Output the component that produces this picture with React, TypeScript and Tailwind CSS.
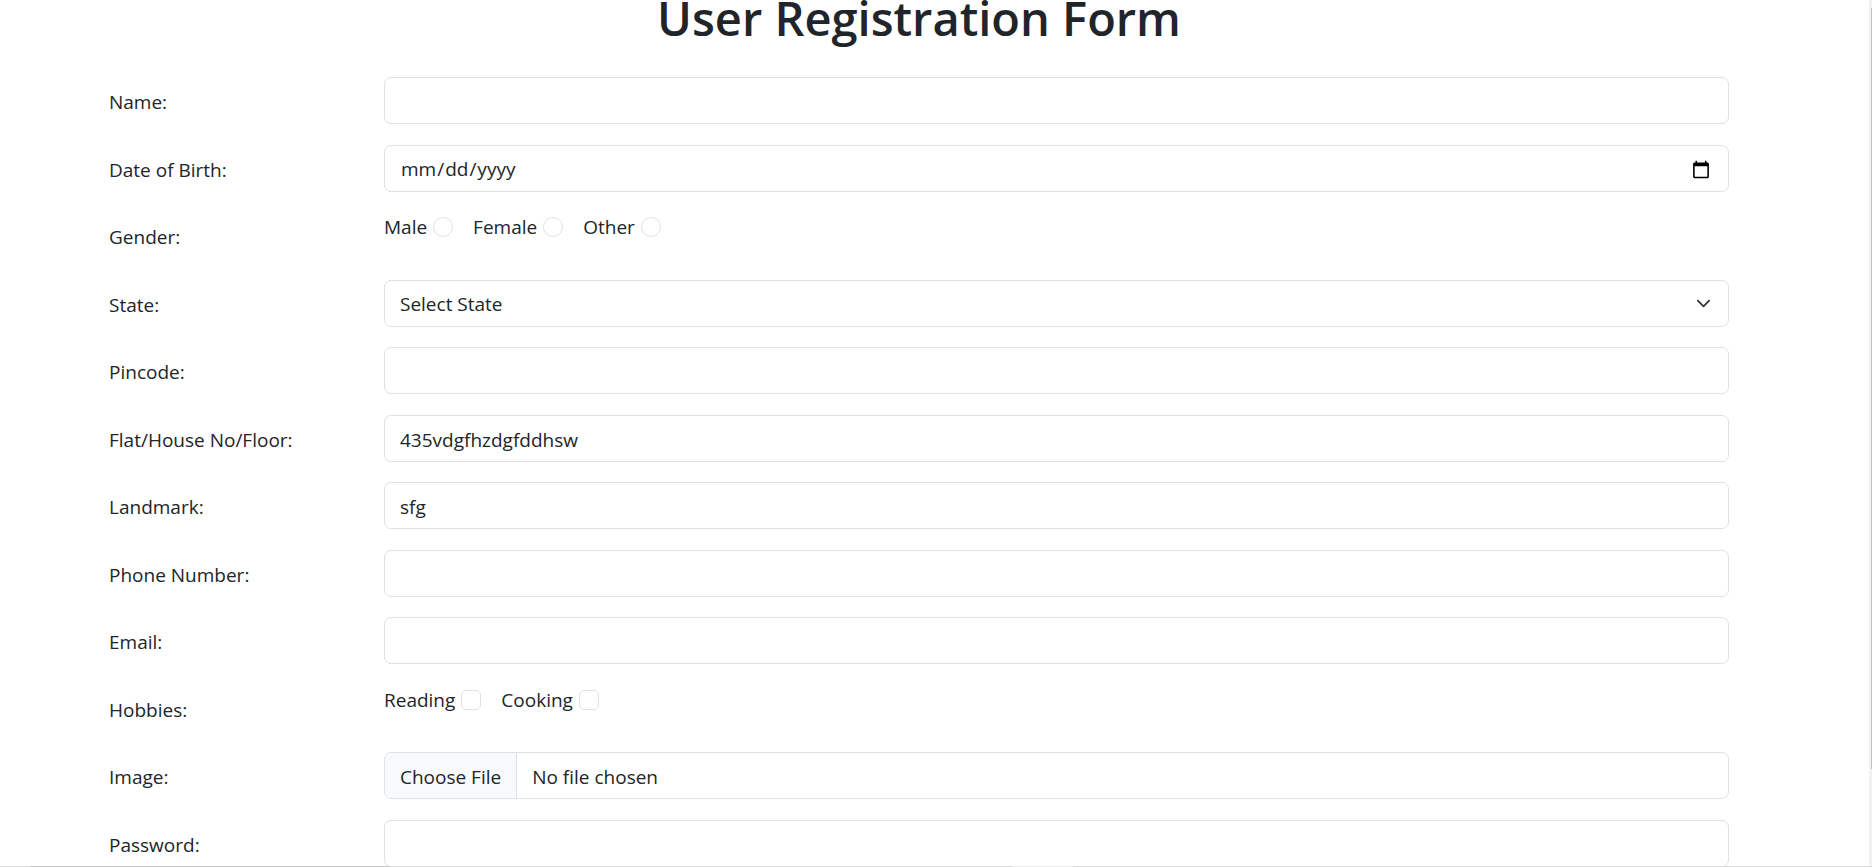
import type { ReactNode } from "react";

const control =
  "block h-[47px] w-full rounded-[7px] border border-[#dee2e6] bg-white px-[15px] pt-0.5 text-[19px] text-[#212529] outline-none focus:border-[#86b7fe]";

function Row({ label, htmlFor, children }: { label: string; htmlFor?: string; children: ReactNode }) {
  const labelClass = "w-1/6 shrink-0 px-[15px] pt-2.5 leading-[30px]";
  return (
    <div className="flex min-h-[47px] odd:mb-[21px] even:mb-5">
      {htmlFor ? (
        <label htmlFor={htmlFor} className={labelClass}>
          {label}
        </label>
      ) : (
        <span className={labelClass}>{label}</span>
      )}
      <div className="min-w-0 flex-1 px-[15px]">{children}</div>
    </div>
  );
}

function TextRow({ id, label, type = "text", value }: { id: string; label: string; type?: string; value?: string }) {
  return (
    <Row label={label} htmlFor={id}>
      <input id={id} name={id} type={type} defaultValue={value} className={control} />
    </Row>
  );
}

function Choices({ type, name, options }: { type: "radio" | "checkbox"; name: string; options: string[] }) {
  const shape = type === "radio" ? "rounded-full" : "rounded-[5px]";
  return (
    <div role="group" aria-label={name} className="flex flex-wrap gap-x-5">
      {options.map((option) => (
        <label key={option} className="flex items-center gap-1.5 leading-[30px]">
          {option}
          <input
            type={type}
            name={name}
            value={option}
            className={`size-5 appearance-none border border-[#dee2e6] bg-white checked:border-[#0d6efd] checked:bg-[#0d6efd] ${shape}`}
          />
        </label>
      ))}
    </div>
  );
}

export default function App() {
  return (
    <div className="relative h-screen overflow-hidden bg-white pr-[34px] font-['Open_Sans','Noto_Sans',sans-serif] text-[19px] text-[#212529]">
      <main className="mx-auto max-w-[1650px]">
        <h1 className="-mt-3 mb-[29px] text-center text-[47px] leading-[60px] font-semibold">User Registration Form</h1>
        <form>
          <TextRow id="name" label="Name:" />
          <Row label="Date of Birth:" htmlFor="dob">
            <input
              id="dob"
              name="dob"
              type="date"
              className={`${control} [&::-webkit-calendar-picker-indicator]:mr-0.5 [&::-webkit-calendar-picker-indicator]:size-5 [&::-webkit-calendar-picker-indicator]:p-0 [&::-webkit-datetime-edit-fields-wrapper]:p-0`}
            />
          </Row>
          <Row label="Gender:">
            <Choices type="radio" name="Gender" options={["Male", "Female", "Other"]} />
          </Row>
          <Row label="State:" htmlFor="state">
            <div className="relative">
              <select id="state" name="state" className={`${control} appearance-none`}>
                <option>Select State</option>
              </select>
              <svg
                aria-hidden="true"
                viewBox="0 0 16 16"
                className="pointer-events-none absolute top-4 right-[18px] size-[15px] fill-none stroke-[#343a40] stroke-2"
                strokeLinecap="round"
                strokeLinejoin="round"
              >
                <path d="m2 5 6 6 6-6" />
              </svg>
            </div>
          </Row>
          <TextRow id="pincode" label="Pincode:" />
          <TextRow id="flat" label="Flat/House No/Floor:" value="435vdgfhzdgfddhsw" />
          <TextRow id="landmark" label="Landmark:" value="sfg" />
          <TextRow id="phone" label="Phone Number:" type="tel" />
          <TextRow id="email" label="Email:" type="email" />
          <Row label="Hobbies:">
            <Choices type="checkbox" name="Hobbies" options={["Reading", "Cooking"]} />
          </Row>
          <Row label="Image:" htmlFor="image">
            <input
              id="image"
              name="image"
              type="file"
              className="block h-[47px] w-full overflow-hidden rounded-[7px] border border-[#dee2e6] bg-white text-[19px] leading-[45px] text-[#212529] file:mr-[15px] file:h-[45px] file:rounded-none file:border-0 file:border-r file:border-solid file:border-[#dee2e6] file:bg-[#f8f9fa] file:px-[15px] file:pt-0.5 file:text-[19px] file:text-[#212529]"
            />
          </Row>
          <TextRow id="password" label="Password:" type="password" />
        </form>
      </main>
      <div aria-hidden="true" className="absolute inset-y-0 right-0 w-[3px] bg-[#f1f1f1] pt-2">
        <div className="ml-auto h-[761px] w-px bg-[#c1c1c1]" />
      </div>
      <div aria-hidden="true" className="absolute inset-x-0 bottom-0 flex h-px bg-[#d9d9d9]">
        <div className="ml-[30px] w-[360px] bg-[#c6c6c6]" />
        <div className="ml-[622px] w-[61px] bg-[#ececec]" />
      </div>
    </div>
  );
}
